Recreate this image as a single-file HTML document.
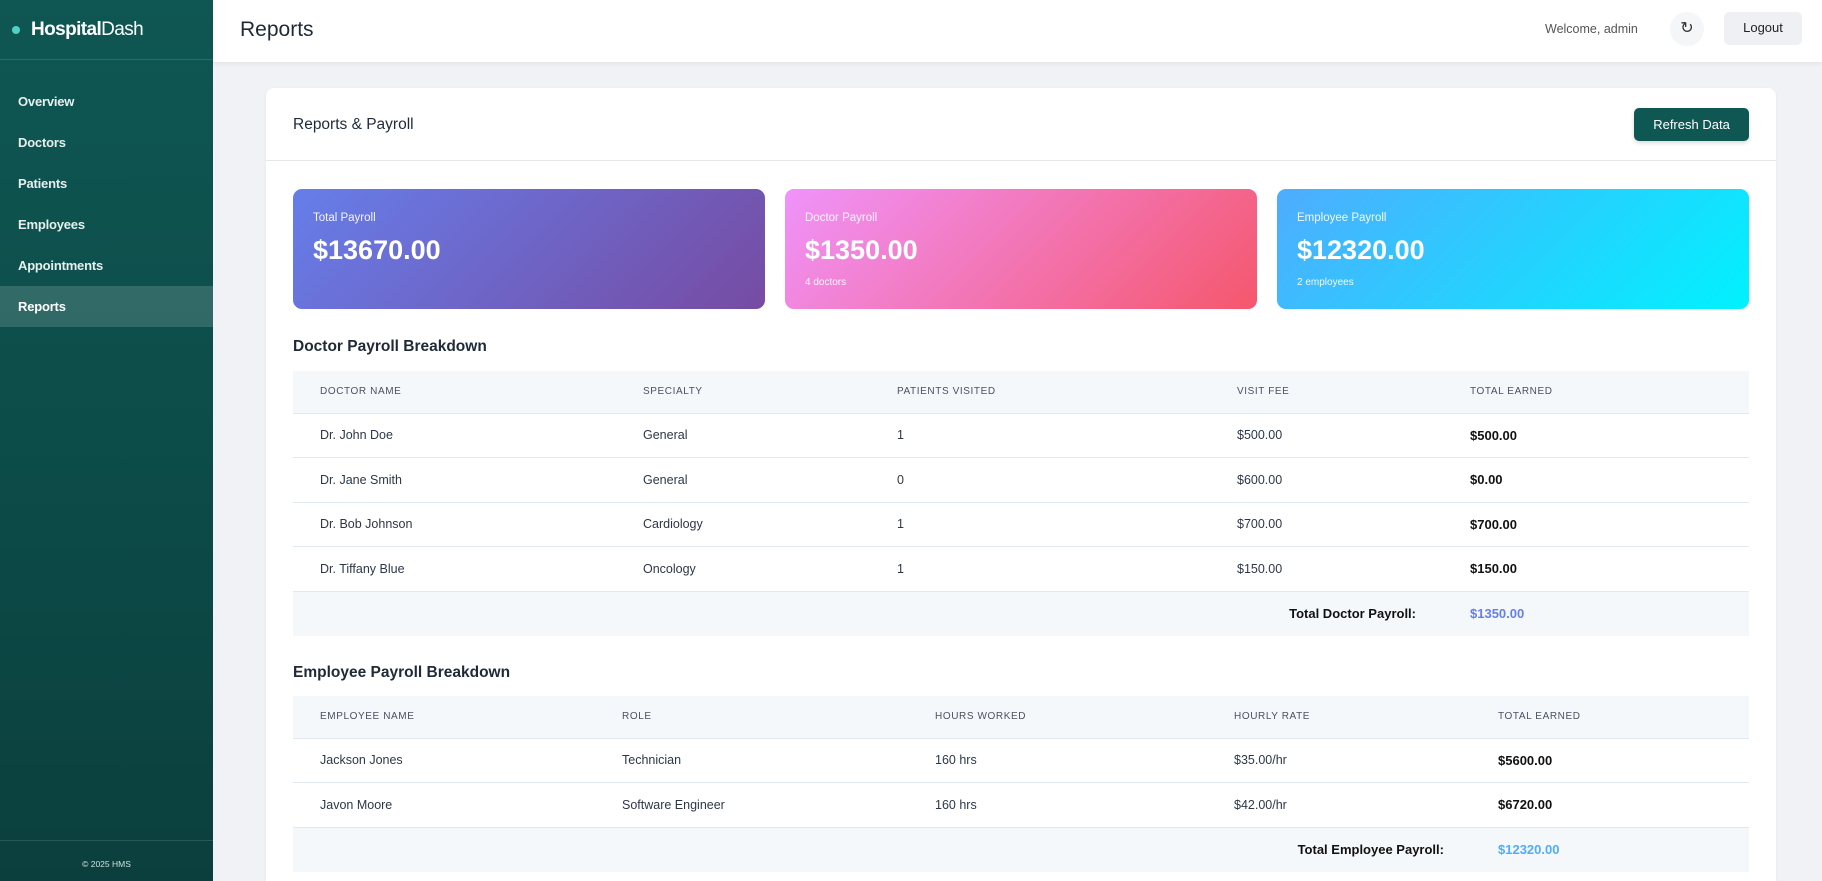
<!DOCTYPE html>
<html><head><meta charset="utf-8"><style>
*{box-sizing:border-box;margin:0;padding:0}
html,body{width:1822px;height:881px;overflow:hidden}
body{font-family:"Liberation Sans",sans-serif;background:#f0f2f5;color:#1f2937;position:relative}
.sb{position:absolute;left:0;top:0;width:213px;height:881px;background:linear-gradient(180deg,#0f5753 0%,#0c4a47 60%,#0b3f3d 100%);color:#fff}
.logo{height:60px;border-bottom:1px solid rgba(255,255,255,.12);display:flex;align-items:center;padding-left:12px;font-size:19px;letter-spacing:-.6px}
.logo .dot{width:8px;height:8px;border-radius:50%;background:#4fd1c5;margin-right:11px}
.logo b{font-weight:700}
.nav{position:absolute;top:81px;left:0;width:213px}
.nav div{height:41px;line-height:41px;padding-left:18px;font-size:13px;font-weight:700;color:#e6efee;letter-spacing:-.2px}
.nav div.act{background:rgba(255,255,255,.15);color:#fff}
.sbf{position:absolute;left:0;top:840px;width:213px;border-top:1px solid rgba(255,255,255,.12);text-align:center;font-size:8.5px;color:#cfe0de;padding-top:18px}
.top{position:absolute;left:213px;top:0;right:0;height:62px;background:#fff;box-shadow:0 2px 4px rgba(0,0,0,.06)}
.top h1{position:absolute;left:27px;top:18px;font-size:21px;font-weight:400;color:#1f2a37}
.wel{position:absolute;left:1332px;top:22px;font-size:12.5px;color:#555}
.ref{position:absolute;left:1457px;top:12px;width:34px;height:34px;border-radius:50%;background:#f5f6f8;text-align:center;line-height:33px;font-size:16px;color:#333}
.lo{position:absolute;left:1511px;top:12px;width:78px;height:33px;border-radius:5px;background:#eff0f3;text-align:center;line-height:32px;font-size:13px;color:#222}
.card{position:absolute;left:266px;top:88px;width:1510px;height:793px;background:#fff;border-radius:8px 8px 0 0;box-shadow:0 1px 3px rgba(0,0,0,.06)}
.ch{height:73px;border-bottom:1px solid #e5e7eb;position:relative}
.ch h2{position:absolute;left:27px;top:28px;font-size:15.5px;font-weight:400;color:#1f2a37}
.rb{position:absolute;left:1368px;top:20px;width:115px;height:33px;background:#0f5753;color:#fff;border-radius:5px;font-size:13px;text-align:center;line-height:33px;box-shadow:0 2px 4px rgba(0,0,0,.15)}
.st{position:absolute;top:189px;width:472px;height:120px;border-radius:9px;color:#fff;padding:23px 20px}
.st .l{font-size:11.5px;opacity:.92}
.st .v{font-size:27px;font-weight:700;margin-top:11px}
.st .s{font-size:10px;margin-top:11px;opacity:.92}
.h3{position:absolute;left:293px;font-size:15.5px;font-weight:700;color:#1f2a37}
table{position:absolute;left:293px;width:1456px;border-collapse:collapse;table-layout:fixed;font-size:12.5px;color:#2d3748}
th{background:#f5f8fb;height:42px;text-align:left;font-weight:400;font-size:10px;letter-spacing:.6px;color:#4a5060;border-bottom:1px solid #e2e8f0}
td{height:44.5px;border-bottom:1px solid #e2e8f0}
th:first-child,td:first-child{padding-left:27px}
td b{color:#111;font-size:13px}
tr.f td{background:#f5f8fb;border-bottom:none;font-weight:700;font-size:13px}
tr.f td.lab{text-align:right;padding-right:54px;color:#111}
</style></head><body>
<div class="sb">
<div class="logo"><span class="dot"></span><b>Hospital</b>Dash</div>
<div class="nav"><div>Overview</div><div>Doctors</div><div>Patients</div><div>Employees</div><div>Appointments</div><div class="act">Reports</div></div>
<div class="sbf">© 2025 HMS</div>
</div>
<div class="top"><h1>Reports</h1><div class="wel">Welcome, admin</div><div class="ref">↻</div><div class="lo">Logout</div></div>
<div class="card"><div class="ch"><h2>Reports &amp; Payroll</h2><div class="rb">Refresh Data</div></div></div>
<div class="st" style="left:293px;background:linear-gradient(135deg,#667eea,#764ba2)"><div class="l">Total Payroll</div><div class="v">$13670.00</div></div>
<div class="st" style="left:785px;background:linear-gradient(135deg,#f093fb,#f5576c)"><div class="l">Doctor Payroll</div><div class="v">$1350.00</div><div class="s">4 doctors</div></div>
<div class="st" style="left:1277px;background:linear-gradient(135deg,#4facfe,#00f2fe)"><div class="l">Employee Payroll</div><div class="v">$12320.00</div><div class="s">2 employees</div></div>
<div class="h3" style="top:338px">Doctor Payroll Breakdown</div>
<table style="top:371px">
<colgroup><col style="width:350px"><col style="width:254px"><col style="width:340px"><col style="width:233px"><col style="width:279px"></colgroup>
<tr><th>DOCTOR NAME</th><th>SPECIALTY</th><th>PATIENTS VISITED</th><th>VISIT FEE</th><th>TOTAL EARNED</th></tr>
<tr><td>Dr. John Doe</td><td>General</td><td>1</td><td>$500.00</td><td><b>$500.00</b></td></tr>
<tr><td>Dr. Jane Smith</td><td>General</td><td>0</td><td>$600.00</td><td><b>$0.00</b></td></tr>
<tr><td>Dr. Bob Johnson</td><td>Cardiology</td><td>1</td><td>$700.00</td><td><b>$700.00</b></td></tr>
<tr><td>Dr. Tiffany Blue</td><td>Oncology</td><td>1</td><td>$150.00</td><td><b>$150.00</b></td></tr>
<tr class="f"><td colspan="4" class="lab">Total Doctor Payroll:</td><td style="color:#667eea">$1350.00</td></tr>
</table>
<div class="h3" style="top:664px">Employee Payroll Breakdown</div>
<table style="top:696px">
<colgroup><col style="width:329px"><col style="width:313px"><col style="width:299px"><col style="width:264px"><col style="width:251px"></colgroup>
<tr><th>EMPLOYEE NAME</th><th>ROLE</th><th>HOURS WORKED</th><th>HOURLY RATE</th><th>TOTAL EARNED</th></tr>
<tr><td>Jackson Jones</td><td>Technician</td><td>160 hrs</td><td>$35.00/hr</td><td><b>$5600.00</b></td></tr>
<tr><td>Javon Moore</td><td>Software Engineer</td><td>160 hrs</td><td>$42.00/hr</td><td><b>$6720.00</b></td></tr>
<tr class="f"><td colspan="4" class="lab">Total Employee Payroll:</td><td style="color:#4facfe">$12320.00</td></tr>
</table>
</body></html>
